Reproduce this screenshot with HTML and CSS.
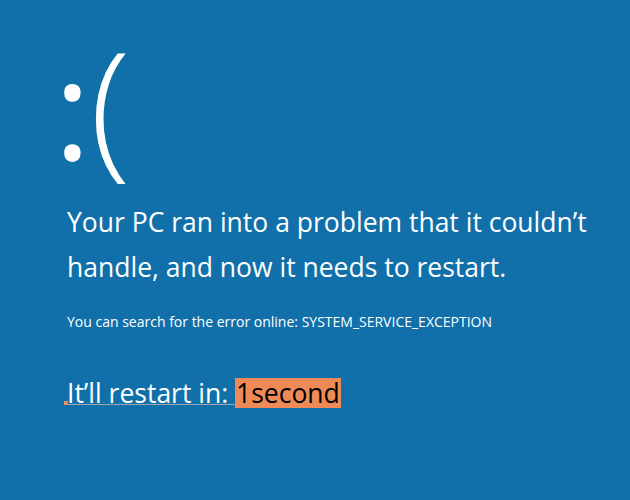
FILE: index.html
```html
<!DOCTYPE html>
<html lang="en">
<head>
<meta charset="utf-8">
<title>Your PC ran into a problem</title>
<link rel="stylesheet" href="styles.css">
</head>
<body>
<main class="screen">
  <div class="face"><span class="colon">:</span><span class="paren">(</span></div>
  <p class="message">Your PC ran into a problem that it couldn’t<br>handle, and now it needs to restart.</p>
  <p class="code">You can search for the error online: SYSTEM_SERVICE_EXCEPTION</p>
  <p class="restart"><span class="caret"></span><span class="label">It’ll restart in:&nbsp;</span><span class="count">1second</span></p>
</main>
</body>
</html>
```

FILE: styles.css
```css
html, body {
  margin: 0;
  padding: 0;
  background: #1170aa;
}
body {
  width: 630px;
  height: 500px;
  overflow: hidden;
  font-family: "Open Sans", "Noto Sans", sans-serif;
  color: #ffffff;
}
.screen {
  display: flex;
  flex-direction: column;
  align-items: flex-start;
  padding: 0 0 0 67px;
}
.face {
  display: flex;
  align-items: baseline;
  margin: 27px 0 0 -13px;
}
.colon {
  font-size: 140px;
  line-height: 1;
}
.paren {
  font-size: 150px;
  line-height: 1;
  font-weight: 300;
  margin-left: -1px;
}
.message {
  margin: 23px 0 0 0;
  font-size: 26.5px;
  line-height: 45px;
}
.code {
  margin: 22px 0 0 0;
  font-size: 14px;
  line-height: 20px;
}
.restart {
  position: relative;
  margin: 46px 0 0 0;
  font-size: 26.5px;
  line-height: 30px;
}
.label {
  text-decoration: underline;
  text-decoration-color: #9aa6b0;
  text-decoration-thickness: 1px;
  text-underline-offset: 1px;
}
.caret {
  position: absolute;
  left: -3px;
  top: 23px;
  width: 4px;
  height: 4px;
  background: #ee8a57;
}
.count {
  display: inline-block;
  vertical-align: top;
  background: #ee8a57;
  color: #000000;
  padding: 0 1px;
}
```
